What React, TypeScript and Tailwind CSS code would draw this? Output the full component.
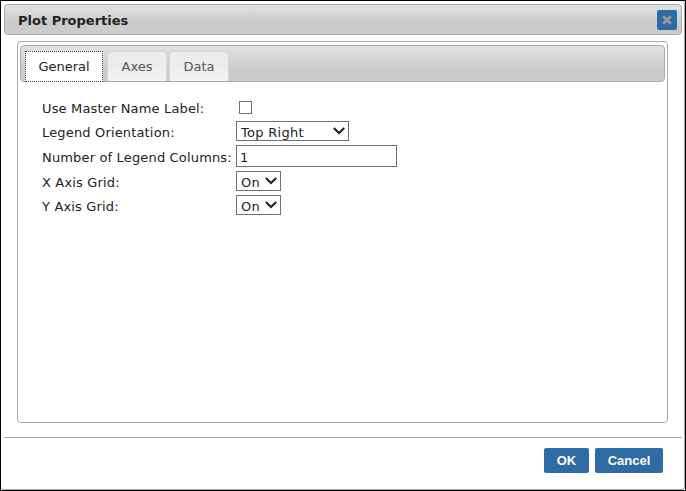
import type { ReactNode } from 'react';

function Field({ label, className, children }: { label: string; className: string; children: ReactNode }) {
  return (
    <div className={`flex items-start ${className}`}>
      <span className="w-[194px] shrink-0 whitespace-nowrap leading-4 tracking-[0.16px]">{label}</span>
      {children}
    </div>
  );
}

function Select({ value, className }: { value: string; className: string }) {
  return (
    <button className={`flex h-5 items-start justify-between overflow-hidden border border-[#707070] bg-white pl-1 pr-[3px] tracking-[0.3px] ${className}`}>
      <span className="h-[18px] overflow-hidden whitespace-nowrap pt-[3px] leading-4">{value}</span>
      <svg className="mt-[5px] shrink-0" width="12" height="8" viewBox="0 0 12 8" fill="none" stroke="#222" strokeWidth="2.1">
        <path d="M0.8 1L6 6.1L11.2 1" />
      </svg>
    </button>
  );
}

function Tab({ label, className }: { label: string; className: string }) {
  return (
    <button className={`h-[30px] rounded-t-[4px] border border-b-0 border-[#d3d3d3] bg-linear-to-b from-[#ececec] from-50% to-[#f4f4f4] text-center leading-[29px] text-[#555] ${className}`}>
      {label}
    </button>
  );
}

export default function App() {
  return (
    <div className="h-[491px] w-[686px] border border-black bg-white font-['Verdana','DejaVu_Sans',sans-serif] text-[13px] text-[#222]">
      <div className="flex h-[489px] w-[684px] flex-col rounded-[4px] border-b border-r border-[#aaa] bg-white pl-[3px] pr-[2px] pt-[3px]">
        <header className="flex h-[31px] w-[678px] shrink-0 items-center justify-between rounded-[4px] border border-[#aaa] bg-linear-to-b from-[#e2e2e2] to-[#cbcbcb] to-60% pl-[13px] pr-[4px]">
          <h1 className="pt-[2px] text-[13px] font-bold leading-4">Plot Properties</h1>
          <button aria-label="Close" className="flex h-5 w-5 items-center justify-center rounded-[2px] bg-[#2d6ca2]">
            <svg width="10" height="10" viewBox="0 0 10 10" stroke="#999" strokeWidth="3">
              <path d="M1.2 1.2L8.8 8.8M8.8 1.2L1.2 8.8" />
            </svg>
          </button>
        </header>

        <main className="ml-[13px] mt-[6px] h-[382px] w-[651px] shrink-0 rounded-[4px] border border-[#aaa] px-[2px] pt-[3px]">
          <nav className="flex h-[37px] w-[645px] rounded-[4px] border border-[#aaa] bg-linear-to-b from-[#e2e2e2] to-[#cbcbcb] to-65% pl-[4px] pt-[5px]">
            <button className="-mb-px h-[31px] w-[78px] shrink-0 border border-dotted border-[#444] bg-white text-center leading-[29px]">General</button>
            <Tab label="Axes" className="ml-[4px] w-[60px]" />
            <Tab label="Data" className="ml-[2px] w-[60px]" />
          </nav>

          <form className="flex flex-col pl-[22px] pt-[16px]">
            <Field label="Use Master Name Label:" className="h-[23px] *:first:pt-[3px]">
              <span className="ml-[3px] mt-[3px] h-[13px] w-[13px] border border-[#707070]" />
            </Field>
            <Field label="Legend Orientation:" className="h-[24px] *:first:pt-[4px]">
              <Select value="Top Right" className="w-[113px]" />
            </Field>
            <Field label="Number of Legend Columns:" className="h-[26px] *:first:pt-[5px]">
              <input readOnly value="1" className="h-[22px] w-[161px] border border-[#707070] px-[3px] pt-[2px] leading-4 outline-none" />
            </Field>
            <Field label="X Axis Grid:" className="h-[24px] *:first:pt-[4px]">
              <Select value="On" className="w-[45px]" />
            </Field>
            <Field label="Y Axis Grid:" className="h-[24px] *:first:pt-[4px]">
              <Select value="On" className="w-[45px]" />
            </Field>
          </form>
        </main>

        <footer className="mt-[14px] flex w-[678px] shrink-0 justify-end gap-[6px] border-t border-[#aaa] pr-[19px] pt-[10px] font-['Liberation_Sans',Arial,sans-serif] text-[13px] font-bold leading-[25px] text-white">
          <button className="h-[25px] w-[45px] rounded-[2px] bg-[#2d6ca2]">OK</button>
          <button className="h-[25px] w-[68px] rounded-[2px] bg-[#2d6ca2]">Cancel</button>
        </footer>
      </div>
    </div>
  );
}
